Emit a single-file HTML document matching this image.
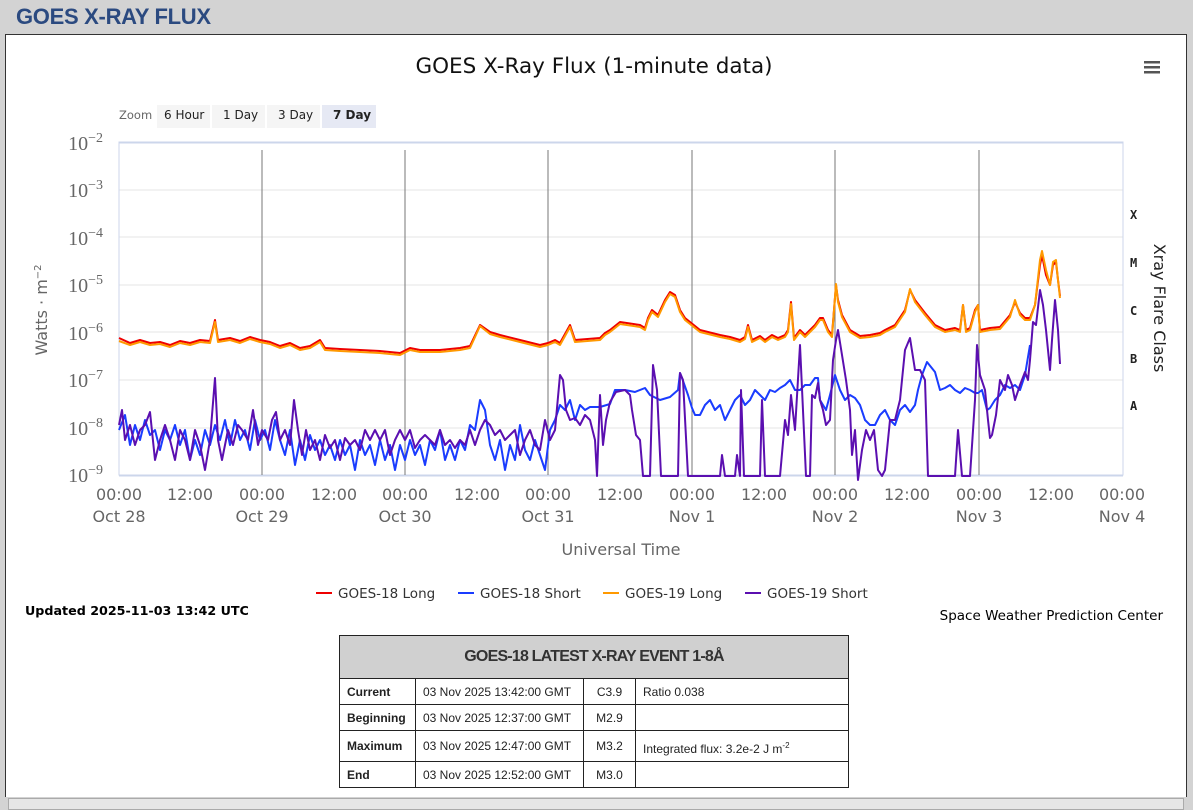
<!DOCTYPE html>
<html><head><meta charset="utf-8"><style>
html,body{margin:0;padding:0;background:#d3d3d3;width:1193px;height:806px;overflow:hidden;font-family:"Liberation Sans",sans-serif}
.h{position:absolute;left:16px;top:4px;font:bold 22px "Liberation Sans",sans-serif;color:#2b4a80;letter-spacing:-0.3px}
.box{position:absolute;left:5px;top:34px;width:1180px;height:762px;background:#fff;border:1px solid #333;border-bottom:none}
.bot{position:absolute;left:8px;top:798px;width:1174px;height:10px;background:#e6e6e6;border:1px solid #aaa}
table{position:absolute;left:339px;top:635px;border-collapse:collapse;width:510px;font-size:12px;color:#222;table-layout:fixed}
td{border:1px solid #222;height:25px;padding:0 7px;white-space:nowrap;overflow:hidden}
th{background:#d0d0d0;height:40px;border:1px solid #222;font:bold 16px "Liberation Sans Narrow","Liberation Sans",sans-serif;color:#333;letter-spacing:-0.8px}
</style></head><body>
<div class="h">GOES X-RAY FLUX</div>
<div class="box"></div>
<svg style="position:absolute;left:0;top:0" width="1193" height="806" font-family="Liberation Sans, sans-serif">
<text x="594" y="73" text-anchor="middle" font-size="21.5" fill="#111" font-family="DejaVu Sans, sans-serif">GOES X-Ray Flux (1-minute data)</text>
<g fill="#555"><rect x="1144" y="61" width="16" height="2.5"/><rect x="1144" y="66" width="16" height="2.5"/><rect x="1144" y="71" width="16" height="2.5"/></g>
<text x="119" y="119" font-size="11.5" fill="#666" font-family="DejaVu Sans, sans-serif">Zoom</text>
<rect x="157" y="105" width="53" height="23" fill="#f5f5f5"/><rect x="212" y="105" width="53" height="23" fill="#f5f5f5"/><rect x="267" y="105" width="53" height="23" fill="#f5f5f5"/><rect x="322" y="105" width="54" height="23" fill="#e6e9f4"/>
<g font-size="12" fill="#222" font-family="DejaVu Sans, sans-serif"><text x="164" y="119">6 Hour</text><text x="223" y="119">1 Day</text><text x="278" y="119">3 Day</text><text x="333" y="119" font-weight="bold">7 Day</text></g>
<g stroke="#e6e6e6"><line x1="119" x2="1123" y1="190" y2="190"/><line x1="119" x2="1123" y1="237" y2="237"/><line x1="119" x2="1123" y1="285" y2="285"/><line x1="119" x2="1123" y1="332" y2="332"/><line x1="119" x2="1123" y1="380" y2="380"/><line x1="119" x2="1123" y1="428" y2="428"/></g>
<rect x="119" y="142" width="1004" height="333" fill="none" stroke="#ccd6eb"/>
<line x1="119" x2="1123" y1="142.5" y2="142.5" stroke="#ccd6eb" stroke-width="2"/>
<line x1="119" x2="1123" y1="475.5" y2="475.5" stroke="#ccd6eb" stroke-width="2"/>
<g stroke="#777"><line x1="262" x2="262" y1="150" y2="475"/><line x1="405" x2="405" y1="150" y2="475"/><line x1="548" x2="548" y1="150" y2="475"/><line x1="692" x2="692" y1="150" y2="475"/><line x1="835" x2="835" y1="150" y2="475"/><line x1="979" x2="979" y1="150" y2="475"/></g>
<g font-family="Liberation Serif, serif" font-size="20" fill="#666" text-anchor="end">
<text x="103" y="150">10<tspan dy="-8" font-size="14">−2</tspan></text>
<text x="103" y="197">10<tspan dy="-8" font-size="14">−3</tspan></text>
<text x="103" y="245">10<tspan dy="-8" font-size="14">−4</tspan></text>
<text x="103" y="292">10<tspan dy="-8" font-size="14">−5</tspan></text>
<text x="103" y="340">10<tspan dy="-8" font-size="14">−6</tspan></text>
<text x="103" y="387">10<tspan dy="-8" font-size="14">−7</tspan></text>
<text x="103" y="435">10<tspan dy="-8" font-size="14">−8</tspan></text>
<text x="103" y="482">10<tspan dy="-8" font-size="14">−9</tspan></text>
</g>
<text transform="translate(47,310) rotate(-90)" text-anchor="middle" font-size="16" fill="#666" font-family="DejaVu Sans, sans-serif">Watts · m<tspan dy="-6" font-size="10">−2</tspan></text>
<g font-size="12" fill="#222" font-family="DejaVu Sans Mono, monospace" font-weight="bold"><text x="1130" y="219">X</text><text x="1130" y="267">M</text><text x="1130" y="315">C</text><text x="1130" y="363">B</text><text x="1130" y="410">A</text></g>
<text transform="translate(1154,308) rotate(90)" text-anchor="middle" font-size="16" fill="#222" font-family="DejaVu Sans, sans-serif">Xray Flare Class</text>
<g font-size="16" fill="#666" text-anchor="middle" font-family="DejaVu Sans, sans-serif">
<text x="119" y="500">00:00</text><text x="119" y="522">Oct 28</text>
<text x="190" y="500">12:00</text>
<text x="262" y="500">00:00</text><text x="262" y="522">Oct 29</text>
<text x="334" y="500">12:00</text>
<text x="405" y="500">00:00</text><text x="405" y="522">Oct 30</text>
<text x="477" y="500">12:00</text>
<text x="548" y="500">00:00</text><text x="548" y="522">Oct 31</text>
<text x="620" y="500">12:00</text>
<text x="692" y="500">00:00</text><text x="692" y="522">Nov 1</text>
<text x="764" y="500">12:00</text>
<text x="835" y="500">00:00</text><text x="835" y="522">Nov 2</text>
<text x="907" y="500">12:00</text>
<text x="979" y="500">00:00</text><text x="979" y="522">Nov 3</text>
<text x="1051" y="500">12:00</text>
<text x="1122" y="500">00:00</text><text x="1122" y="522">Nov 4</text>
<text x="621" y="555">Universal Time</text>
</g>
<g fill="none" stroke-width="2" stroke-linejoin="round">
<polyline stroke="#1a3cff" points="119,430 125,415 130,445 135,425 140,440 145,420 150,435 155,430 160,450 165,430 170,440 175,425 180,445 185,430 190,460 195,440 200,455 205,430 210,445 215,425 220,440 225,420 230,445 235,420 240,440 245,430 250,450 255,420 260,440 265,430 270,450 275,420 280,440 285,455 290,430 295,465 300,440 305,460 310,435 315,450 320,440 325,455 330,445 335,460 340,440 345,455 350,445 355,470 360,440 365,455 370,445 375,465 380,440 385,460 390,445 395,470 400,445 405,460 410,440 415,455 420,445 425,465 430,440 435,450 440,430 445,460 450,445 455,460 460,440 465,450 470,425 475,430 480,400 485,410 490,445 495,460 500,440 505,470 510,445 515,460 520,425 525,450 530,460 535,440 540,455 545,470 550,430 555,420 560,405 565,410 570,400 575,420 580,405 585,410 590,407 600,407 610,404 615,390 625,390 635,392 645,388 650,395 660,400 670,397 678,390 680,373 682,378 688,395 692,408 695,415 700,415 705,405 710,400 715,410 720,405 725,420 730,410 735,400 740,395 745,405 750,400 755,390 760,395 765,400 770,390 775,392 780,388 785,385 790,380 795,390 800,390 805,385 810,385 815,378 818,378 820,400 823,405 826,410 830,395 835,375 840,390 845,400 850,395 855,398 860,405 865,420 870,425 875,425 880,415 885,410 890,420 895,425 900,410 905,405 910,412 915,405 918,390 922,375 927,362 935,372 940,390 945,388 950,385 955,390 960,393 965,388 970,390 975,393 978,393 982,390 987,410 990,408 995,400 1000,395 1005,385 1010,388 1015,385 1020,390 1025,375 1030,345"/>
<polyline stroke="#5b0fb0" points="119,425 122,410 125,440 130,425 135,445 140,430 145,425 150,412 155,460 160,440 165,425 170,440 175,460 180,430 185,440 190,460 195,430 200,445 205,470 210,440 215,378 218,440 222,460 228,430 233,445 238,425 242,430 248,440 253,410 258,445 262,430 268,440 272,420 276,412 280,440 285,430 290,445 294,400 298,430 302,455 306,430 310,450 315,440 320,460 325,435 330,448 335,440 340,460 345,438 350,445 355,440 360,450 365,430 370,440 375,430 380,440 385,430 390,455 395,440 400,430 405,440 410,430 415,448 420,440 425,435 430,440 435,445 440,430 445,445 450,440 455,448 460,440 465,445 470,430 475,445 480,430 485,420 490,425 495,435 500,430 505,440 510,435 515,430 520,455 525,440 530,430 535,445 540,450 545,420 550,440 555,430 560,375 563,380 566,410 570,420 575,418 580,425 585,415 590,420 595,440 597,476 600,395 603,445 606,420 610,402 616,392 625,390 630,395 632,410 636,435 640,440 643,476 650,476 653,365 657,390 661,476 678,476 680,373 683,380 688,476 692,476 697,476 700,476 720,476 722,455 725,476 735,476 737,455 740,476 741,390 744,476 760,476 762,400 765,476 780,476 785,420 788,435 791,395 795,430 800,345 806,476 810,476 812,395 815,398 818,383 820,400 823,410 826,425 830,420 833,360 836,340 838,330 842,355 846,380 850,410 852,455 855,430 858,480 862,450 866,430 870,440 874,430 878,470 882,476 885,470 890,420 895,420 900,400 905,350 910,338 915,370 920,370 925,380 928,476 955,476 958,430 962,476 970,476 975,400 977,345 980,375 985,390 988,420 990,438 992,435 996,415 1000,380 1005,390 1008,375 1012,385 1015,400 1020,385 1025,372 1028,380 1030,360 1033,322 1036,325 1040,290 1043,305 1046,330 1050,370 1052,340 1055,300 1058,330 1060,364"/>
<polyline stroke="#e00" points="119,338 130,343 140,340 150,343 160,342 170,345 180,341 190,343 200,340 210,341 215,320 218,340 230,338 240,341 250,337 260,340 270,342 280,346 290,343 300,348 310,346 320,340 325,348 340,349 360,350 380,351 400,353 410,348 420,350 440,350 460,348 470,346 480,325 490,332 500,335 520,340 540,345 548,343 555,340 560,343 570,325 575,340 600,338 605,333 610,330 620,322 640,325 645,328 648,318 652,310 658,315 665,300 670,292 675,295 680,310 685,318 690,322 700,330 720,335 730,337 740,340 745,337 748,325 752,340 760,336 765,340 772,335 778,338 785,335 788,330 791,302 794,338 800,330 805,335 810,330 815,325 820,318 823,318 828,330 832,335 836,285 838,300 842,315 850,330 860,336 870,335 880,333 885,330 895,325 905,310 910,290 915,300 925,313 935,325 945,330 955,328 960,330 963,305 966,330 970,328 975,310 978,305 980,330 990,328 1000,327 1010,315 1015,302 1020,313 1025,318 1030,318 1035,305 1040,265 1042,255 1046,275 1050,285 1053,265 1056,262 1058,280 1060,296"/>
<polyline stroke="#ff9900" points="119,341 130,345 140,342 150,345 160,344 170,347 180,343 190,345 200,342 210,343 215,322 218,342 230,340 240,343 250,339 260,342 270,344 280,348 290,345 300,350 310,348 320,342 325,350 340,351 360,352 380,353 400,355 410,350 420,352 440,352 460,350 470,348 480,326 490,334 500,337 520,342 540,347 548,345 555,342 560,345 570,327 575,342 600,340 605,335 610,332 620,324 640,327 645,330 648,320 652,312 658,317 665,302 670,294 675,297 680,312 685,320 690,324 700,332 720,337 730,339 740,342 745,339 748,327 752,342 760,338 765,342 772,337 778,340 785,337 788,332 791,304 794,340 800,332 805,337 810,332 815,327 820,320 823,320 828,332 832,337 836,284 838,302 842,317 850,332 860,338 870,337 880,335 885,332 895,327 905,312 910,289 915,302 925,315 935,327 945,332 955,330 960,332 963,305 966,332 970,330 975,312 978,305 980,332 990,330 1000,329 1010,317 1015,300 1020,315 1025,320 1030,320 1035,305 1040,260 1042,251 1046,270 1050,285 1053,262 1056,260 1058,280 1060,298"/>
</g>
<g font-size="13.5" fill="#333" font-family="DejaVu Sans, sans-serif">
<line x1="316" x2="332" y1="593" y2="593" stroke="#e00" stroke-width="2"/><text x="338" y="598">GOES-18 Long</text>
<line x1="458" x2="474" y1="593" y2="593" stroke="#1a3cff" stroke-width="2"/><text x="480" y="598">GOES-18 Short</text>
<line x1="603" x2="619" y1="593" y2="593" stroke="#ff9900" stroke-width="2"/><text x="625" y="598">GOES-19 Long</text>
<line x1="745" x2="761" y1="593" y2="593" stroke="#5b0fb0" stroke-width="2"/><text x="767" y="598">GOES-19 Short</text>
</g>
<text x="25" y="615" font-size="12.7" font-weight="bold" fill="#000" font-family="DejaVu Sans, sans-serif">Updated 2025-11-03 13:42 UTC</text>
<text x="1163" y="620" font-size="13.5" fill="#000" text-anchor="end" font-family="DejaVu Sans, sans-serif">Space Weather Prediction Center</text>
</svg>
<table>
<colgroup><col style="width:76px"><col style="width:168px"><col style="width:52px"><col></colgroup>
<tr><th colspan="4">GOES-18 LATEST X-RAY EVENT 1-8Å</th></tr>
<tr><td style="font-weight:bold">Current</td><td>03 Nov 2025 13:42:00 GMT</td><td style="text-align:center">C3.9</td><td>Ratio 0.038</td></tr>
<tr><td style="font-weight:bold">Beginning</td><td>03 Nov 2025 12:37:00 GMT</td><td style="text-align:center">M2.9</td><td></td></tr>
<tr><td style="font-weight:bold;height:28px">Maximum</td><td>03 Nov 2025 12:47:00 GMT</td><td style="text-align:center">M3.2</td><td style="padding-top:5px">Integrated flux: 3.2e-2 J m<sup style="font-size:8px">-2</sup></td></tr>
<tr><td style="font-weight:bold">End</td><td>03 Nov 2025 12:52:00 GMT</td><td style="text-align:center">M3.0</td><td></td></tr>
</table>
<div class="bot"></div>
</body></html>
